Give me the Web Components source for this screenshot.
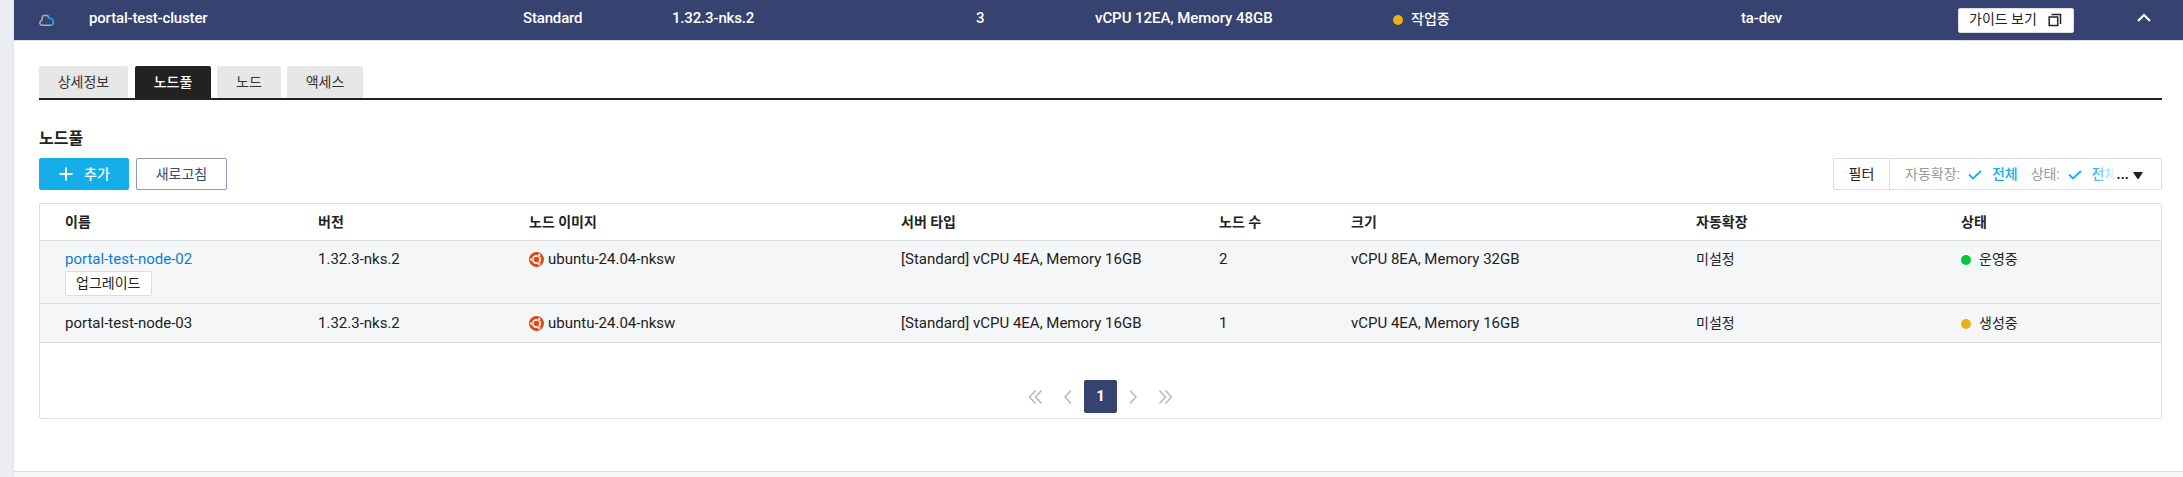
<!DOCTYPE html>
<html lang="ko">
<head>
<meta charset="utf-8">
<title>Cluster</title>
<style>
html,body{margin:0;height:100%;overflow:hidden;background:#fff}
body{font:14px/20px Roboto,"Noto Sans CJK KR",sans-serif;color:#222}
</style>
</head>
<body>
<cluster-page></cluster-page>
<script>
const define = (name, html) => customElements.define(name, class extends HTMLElement {
  constructor() {
    super();
    const t = document.createElement('template');
    t.innerHTML = html;
    this.attachShadow({mode: 'open'}).append(t.content.cloneNode(true));
  }
});

define('status-dot', `<style>
:host{display:inline-flex;align-items:center;gap:8px}
i{width:10px;height:10px;border-radius:50%;background:var(--dot,#e9b116);margin-top:2px}
</style><i></i><span><slot></slot></span>`);

define('small-button', `<style>
:host{display:inline-flex;align-items:center;box-sizing:border-box;height:25px;padding:0 10px 2px;border:1px solid #ddd;border-radius:2px;background:#fff;color:#222;white-space:nowrap}
</style><slot></slot>`);

define('cluster-bar', `<style>
:host{display:grid;grid-template-columns:50px 434px 149px 304px 119px 298px 348px 217px 179px 1fr;align-items:center;height:40px;padding-left:25px;box-sizing:border-box;background:#36426f;color:#fff}
span{padding-bottom:4px;font-size:15px;font-weight:500;letter-spacing:-.16px}
.wide{letter-spacing:-.06px}
status-dot{padding-bottom:3px;font-weight:500}
small-button{justify-self:start;width:116px}
svg{display:block}
small-button svg{margin:1px 0 0 11px}
.up{margin-bottom:4px}
</style>
<svg width="16" height="13" viewBox="0 0 16 13" fill="none" stroke-width="1.600"><path d="M12.500 11.300H3.200A2.300 2.300 0 0 1 1.700 7.200L3.200 5.500V3.300Q3.300 1.500 5 1.500H8.500L10 3.500" stroke="#a9a9ad"/><path d="M9 2.500L10.200 4.200C12.500 4.300 14.300 6 14.300 8.200C14.300 9.700 13.700 10.700 12.500 11.300" stroke="#27aee6"/></svg>
<span>portal-test-cluster</span><span>Standard</span><span>1.32.3-nks.2</span><span>3</span><span class="wide">vCPU 12EA, Memory 48GB</span>
<status-dot>작업중</status-dot><span>ta-dev</span>
<small-button>가이드 보기<svg width="14" height="14" viewBox="0 0 14 14" fill="none" stroke="#222" stroke-width="1.500"><path d="M1.200 4h8.500v8.500H1.200z"/><path d="M3.500 1.500h9v9.500"/></svg></small-button>
<svg class="up" width="14" height="10" viewBox="0 0 14 10" fill="none" stroke="#fff" stroke-width="2"><path d="M1 8l6-6 6 6"/></svg>`);

define('tab-item', `<style>
:host{display:flex;align-items:center;justify-content:center;height:32px;box-sizing:border-box;padding-bottom:1px;background:#e7e7e7;border-radius:2px 2px 0 0;color:#333}
:host([selected]){background:#222;color:#fff;font-weight:500}
</style><slot></slot>`);

define('tab-strip', `<style>
:host{display:grid;grid-template-columns:90px 76px 64px 76px;column-gap:6px;border-bottom:2px solid #222}
tab-item:first-of-type{margin-right:1px}
</style>
<tab-item>상세정보</tab-item><tab-item selected>노드풀</tab-item><tab-item>노드</tab-item><tab-item>액세스</tab-item>`);

define('pool-button', `<style>
:host{display:flex;align-items:center;justify-content:center;box-sizing:border-box;height:32px;border:1px solid #879bb5;border-radius:2px;color:#3c4a66;padding-bottom:1px}
:host([primary]){background:#16adeb;border-color:#16adeb;color:#fff;font-weight:500;gap:11px;padding-left:1px}
</style><slot></slot>`);

define('filter-box', `<style>
:host{display:flex;box-sizing:border-box;width:329px;height:32px;border:1px solid #ddd;border-radius:2px}
div{display:flex;align-items:center;padding-bottom:1px}
.name{width:55px;justify-content:center;border-right:1px solid #ddd}
.values{padding-left:15px;white-space:nowrap;color:#999}
b{font-weight:500;color:#16adeb}
svg{display:block;flex:none}
.check{margin:2px 10px 0 8px}
.state{margin-left:13px}
.cut{margin-right:-3px;-webkit-mask-image:linear-gradient(90deg,#000 0,transparent 24px)}
.dots{color:#222;font-weight:700;margin-left:2px;width:13px}
.arrow{margin:3px 0 0 3px}
</style>
<div class="name">필터</div>
<div class="values"><span>자동확장:</span><svg class="check" width="14" height="10" viewBox="0 0 14 10" fill="none" stroke="#16adeb" stroke-width="1.8"><path d="M1 4.500l4 4L13 1"/></svg><b>전체</b><span class="state">상태:</span><svg class="check" width="14" height="10" viewBox="0 0 14 10" fill="none" stroke="#16adeb" stroke-width="1.8"><path d="M1 4.500l4 4L13 1"/></svg><b class="cut">전체</b><span class="dots">...</span><svg class="arrow" width="10" height="7" viewBox="0 0 10 7"><path d="M.5 0h9v1L5.500 7h-1L.5 1z" fill="#222"/></svg></div>`);

define('ubuntu-mark', `<style>:host{display:inline-flex;flex:none}svg{display:block}</style>
<svg width="15" height="15" viewBox="0 0 30 30"><circle cx="15" cy="15" r="15" fill="#dd4814"/><circle cx="15" cy="15" r="7.300" fill="none" stroke="#fff" stroke-width="3.800"/><g fill="#fff" stroke="#dd4814" stroke-width="1"><circle cx="4.800" cy="15" r="3"/><circle cx="20.100" cy="6.200" r="3"/><circle cx="20.100" cy="23.800" r="3"/></g></svg>`);

define('pool-row', `<style>
:host{display:grid;grid-template-columns:253px 211px 372px 318px 132px 345px 265px 1fr;box-sizing:border-box;height:var(--h,39px);padding:var(--top,9px) 0 0 25px;background:#f5f6f8;border-bottom:1px solid #ddd;align-items:start}
:host([head]){--top:8px;background:#fff;font-weight:700;height:37px}
</style>
<slot></slot>`);

define('page-nav', `<style>
:host{display:flex;justify-content:center;align-items:center;height:75px}
div{display:flex;align-items:center;margin-top:32px;height:33px}
b{width:33px;height:33px;line-height:32px;font-size:15px;text-align:center;background:#36426f;color:#fff;border-radius:2px;font-weight:700}
svg{display:block;fill:none;stroke:#b8b8b8;stroke-width:1.500}
</style>
<div><svg width="56" height="14"><path d="M7.500 .5L1.500 7l6 6.500M13.500 .5L7.500 7l6 6.500M43 .5L37 7l6 6.500"/></svg><b>1</b><svg width="56" height="14"><path d="M13 .5l6 6.500-6 6.500M42.500 .5l6 6.500-6 6.500M48.500 .5l6 6.500-6 6.500"/></svg></div>`);

define('pool-table', `<style>
:host{display:block;border:1px solid #ddd;border-radius:2px}
a{color:#0d7bd8}
.t{font-size:15px}
.image{display:flex;align-items:center;gap:4px}
.name{display:flex;flex-direction:column;align-items:flex-start}
small-button{margin-top:2px;font-size:14px;width:87px}
</style>
<pool-row head><span>이름</span><span>버전</span><span>노드 이미지</span><span>서버 타입</span><span>노드 수</span><span>크기</span><span>자동확장</span><span>상태</span></pool-row>
<pool-row style="--h:63px;--top:8px"><span class="t name"><a>portal-test-node-02</a><small-button>업그레이드</small-button></span><span class="t">1.32.3-nks.2</span><span class="t image"><ubuntu-mark></ubuntu-mark>ubuntu-24.04-nksw</span><span class="t">[Standard] vCPU 4EA, Memory 16GB</span><span class="t">2</span><span class="t">vCPU 8EA, Memory 32GB</span><span>미설정</span><status-dot style="--dot:#00c73c">운영중</status-dot></pool-row>
<pool-row><span class="t">portal-test-node-03</span><span class="t">1.32.3-nks.2</span><span class="t image"><ubuntu-mark></ubuntu-mark>ubuntu-24.04-nksw</span><span class="t">[Standard] vCPU 4EA, Memory 16GB</span><span class="t">1</span><span class="t">vCPU 4EA, Memory 16GB</span><span>미설정</span><status-dot>생성중</status-dot></pool-row>
<page-nav></page-nav>`);

define('cluster-page', `<style>
:host{display:grid;grid-template-columns:13px 1fr;height:477px}
aside{background:#ecedf2}
main{border-left:1px solid #e2e3e6;display:flex;flex-direction:column}
.body{box-sizing:border-box;height:432px;padding:25px 21px 0 25px;border-top:1px solid #ddd;border-bottom:1px solid #ddd}
h3{margin:29px 0 9px;font-size:16px;line-height:20px;font-weight:700}
.tools{display:flex;gap:7px;margin-bottom:13px}
filter-box{margin-left:auto}
footer{flex:1;background:#f5f6f8}
</style>
<aside></aside>
<main><cluster-bar></cluster-bar>
<div class="body"><tab-strip></tab-strip><h3>노드풀</h3>
<div class="tools"><pool-button primary style="width:90px"><svg width="14" height="14" fill="none" stroke="#fff" stroke-width="2"><path d="M7 .5v13M.5 7h13"/></svg><span>추가</span></pool-button><pool-button style="width:91px">새로고침</pool-button><filter-box></filter-box></div>
<pool-table></pool-table></div><footer></footer></main>`);
</script>
</body>
</html>
